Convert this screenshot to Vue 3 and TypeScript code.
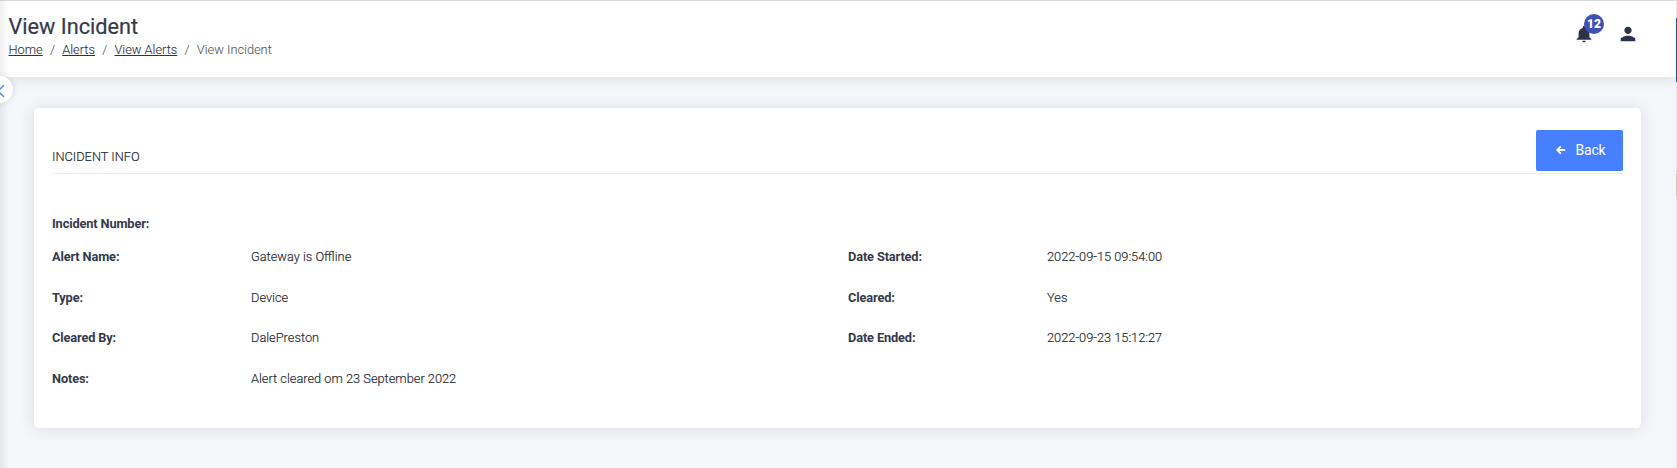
<script setup lang="ts">
interface Field { label: string; value: string }
const crumbs: string[] = ['Home', 'Alerts', 'View Alerts']
const left: Field[] = [
  { label: 'Alert Name:', value: 'Gateway is Offline' },
  { label: 'Type:', value: 'Device' },
  { label: 'Cleared By:', value: 'DalePreston' },
  { label: 'Notes:', value: 'Alert cleared om 23 September 2022' },
]
const right: Field[] = [
  { label: 'Date Started:', value: '2022-09-15 09:54:00' },
  { label: 'Cleared:', value: 'Yes' },
  { label: 'Date Ended:', value: '2022-09-23 15:12:27' },
]
</script>

<template>
  <div class="page">
    <header class="topbar">
      <div class="heading">
        <h1>View Incident</h1>
        <nav class="crumbs">
          <template v-for="c in crumbs" :key="c"><a>{{ c }}</a><span class="sep">/</span></template>
          <span class="current">View Incident</span>
        </nav>
      </div>
      <div class="actions">
        <div class="bell">
          <svg width="20" height="20" viewBox="0 0 24 24"><path d="M12 22c1.100 0 2-.9 2-2h-4c0 1.100.89 2 2 2zm6.500-6v-5c0-3.070-1.900-5.640-5-6.320V4c0-.83-.67-1.500-1.500-1.500s-1.500.67-1.500 1.500v.68C7.400 5.360 5.500 7.920 5.500 11v5l-2.300 2v1h17.600v-1l-2.300-2z" /></svg>
          <span class="badge">12</span>
        </div>
        <svg class="user" width="22" height="22" viewBox="0 0 24 24"><path d="M12 12c2.210 0 4-1.790 4-4s-1.790-4-4-4-4 1.790-4 4 1.790 4 4 4zm0 2c-2.670 0-8 1.340-8 4v2h16v-2c0-2.660-5.330-4-8-4z" /></svg>
      </div>
    </header>

    <main class="card">
      <div class="card-head">
        <h2>INCIDENT INFO</h2>
        <button type="button">
          <svg width="10" height="10" viewBox="0 0 10 10"><path d="M9.300 5H1.500M4.800 1.300L1.200 5l3.600 3.700" /></svg>
          <span>Back</span>
        </button>
      </div>
      <div class="number"><b>Incident Number:</b></div>
      <div class="columns">
        <dl v-for="(col, i) in [left, right]" :key="i">
          <div v-for="f in col" :key="f.label" class="row">
            <dt>{{ f.label }}</dt>
            <dd>{{ f.value }}</dd>
          </div>
        </dl>
      </div>
    </main>

    <div class="edge"></div>
    <div class="toggle">
      <svg width="8" height="14" viewBox="0 0 8 14"><path d="M7 1L1 7l6 6" /></svg>
    </div>
    <div class="scroll"><i class="thumb"></i><i class="mark"></i></div>
  </div>
</template>

<style>
body { margin: 0; overflow: hidden; }
</style>

<style scoped>
* { box-sizing: border-box; }
.page {
  position: relative;
  height: 468px;
  overflow: hidden;
  background: #f5f6fa;
  color: #24282c;
  font: 300 12.800px/20px Roboto, sans-serif;
}
.topbar {
  display: flex;
  justify-content: space-between;
  height: 77px;
  padding: 11px 38px 0 8.500px;
  background: #fff;
  border-top: 1px solid #d9d9d9;
  box-shadow: 0 2px 12px rgba(40, 40, 60, .12);
}
h1 { margin: 1px 0 -1px; font-size: 21.700px; font-weight: 400; line-height: 28px; color: #343a4c; -webkit-text-stroke: .2px; }
.crumbs { display: flex; line-height: 20px; -webkit-text-stroke: .1px; }
.crumbs a { text-decoration: underline; color: #2c3349; }
.sep { width: 19.500px; text-align: center; color: #555d65; }
.current { color: #555d65; }
.actions { display: flex; align-items: flex-start; fill: #2c3349; }
.bell { position: relative; width: 20px; height: 20px; margin: 12px 23px 0 0; }
.bell svg, .user { display: block; }
.user { margin-top: 11px; }
.badge {
  position: absolute;
  left: 10px;
  top: -10px;
  width: 20px;
  height: 20px;
  border-radius: 50%;
  background: #3f51b5;
  color: #fff;
  font: 900 12px/20px Roboto, sans-serif;
  text-align: center;
}
.card {
  height: 320px;
  margin: 31px 36px 0 34px;
  padding: 22px 18px 0;
  background: #fff;
  border-radius: 5px;
  box-shadow: 0 1px 15px rgba(40, 40, 60, .12);
}
.card-head {
  display: flex;
  justify-content: space-between;
  height: 44px;
  border-bottom: 1px solid #ebecec;
}
h2 { margin: 17px 0 0; font-size: 12.800px; font-weight: 300; line-height: 20px; -webkit-text-stroke: .15px; }
button {
  display: flex;
  align-items: center;
  justify-content: center;
  gap: 9px;
  width: 87px;
  height: 41px;
  padding: 0 0 1px 3px;
  border: 0;
  border-radius: 2px;
  background: #4680ff;
  color: #fff;
  font: 400 14px/20px Roboto, sans-serif;
  letter-spacing: -.15px;
}
button svg { fill: none; stroke: #fff; stroke-width: 1.8; }
.number { margin-top: 40px; line-height: 20px; }
.number b, dt { font-weight: 700; color: #343a4b; letter-spacing: -.14px; }
.columns { display: grid; grid-template-columns: 796px 1fr; margin-top: 13px; }
dl { margin: 0; }
.row { display: grid; grid-template-columns: 199px 1fr; height: 40.600px; }
dd { margin: 0; -webkit-text-stroke: .15px; }
.edge {
  position: absolute;
  left: 0;
  top: 0;
  width: 9px;
  height: 468px;
  background: linear-gradient(90deg, rgba(40, 40, 60, .07), rgba(40, 40, 60, 0));
}
.toggle {
  position: absolute;
  left: -14px;
  top: 76px;
  width: 27px;
  height: 27px;
  padding: 8px 0 0 11px;
  border-radius: 50%;
  background: #fff;
  box-shadow: 0 0 6px rgba(40, 40, 60, .15);
}
.toggle svg { display: block; fill: none; stroke: #4086f4; stroke-width: 1.300; }
.scroll { position: absolute; right: 0; top: 0; width: 1px; height: 468px; background: #e8e8ea; }
.scroll i { position: absolute; left: 0; width: 1px; }
.thumb { top: 18px; height: 64px; background: #1f5297; }
.mark { top: 174px; height: 22px; background: #c9c9c9; }
</style>
